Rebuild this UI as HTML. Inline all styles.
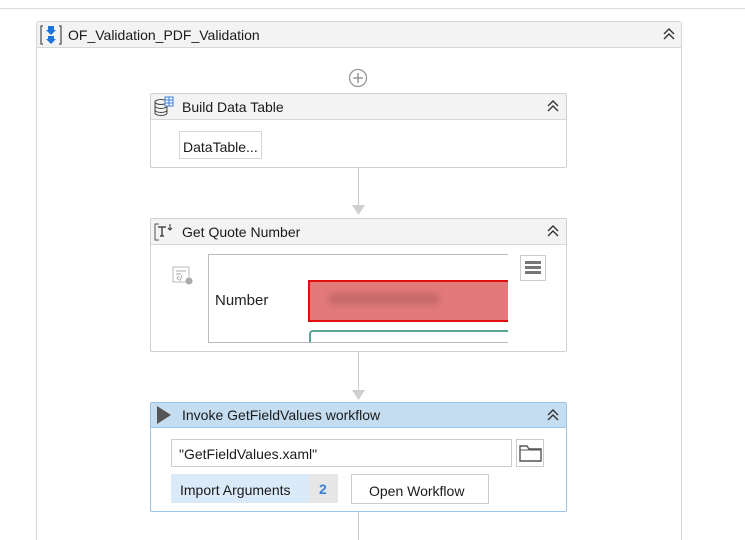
<!DOCTYPE html>
<html style="overflow:hidden;height:540px"><head><style>
*{box-sizing:border-box;margin:0;padding:0}
body{width:745px;height:540px;background:#fff;position:relative;overflow:hidden;font-family:"Segoe UI","Liberation Sans",sans-serif;color:#1a1a1a}
.a{position:absolute}
.hdr{background:#f3f3f3;border-bottom:1px solid #d8d8d8}
.t{font-size:14px;line-height:18px}
</style></head><body>
<div class="a" style="left:0;top:8px;width:745px;height:1px;background:#dcdcdc"></div>
<div class="a" style="left:36px;top:21px;width:646px;height:540px;border:1px solid #d6d6d6;border-radius:3px"></div>
<div class="a hdr" style="left:37px;top:22px;width:644px;height:26px"></div>
<svg class="a" style="left:39px;top:24px" width="24" height="22" viewBox="0 0 24 22"><path d="M4 2H2v18h2M20 2h2v18h-2" stroke="#555" stroke-width="1.3" fill="none"/><rect x="9" y="2" width="6" height="4" fill="#1e73d8"/><path d="M7 6h10l-5 5z" fill="#1e73d8"/><rect x="9" y="12" width="6" height="3" fill="#1e73d8"/><path d="M7 15h10l-5 5z" fill="#1e73d8"/></svg>
<div class="a t" style="left:68px;top:26px">OF_Validation_PDF_Validation</div>
<svg class="a" style="left:662px;top:27px" width="14" height="14" viewBox="0 0 14 14"><path d="M2 7l5-5 5 5M2 12l5-5 5 5" stroke="#333" stroke-width="1.4" fill="none"/></svg>
<svg class="a" style="left:348px;top:68px" width="20" height="20"><circle cx="10" cy="10" r="8.5" stroke="#999" stroke-width="1.3" fill="none"/><path d="M10 5v10M5 10h10" stroke="#888" stroke-width="1.3"/></svg>

<div class="a" style="left:150px;top:93px;width:417px;height:75px;border:1px solid #d0d0d0;border-radius:2px"></div>
<div class="a hdr" style="left:151px;top:94px;width:415px;height:26px"></div>
<svg class="a" style="left:153px;top:96px" width="22" height="22" viewBox="0 0 22 22"><ellipse cx="8" cy="6" rx="6" ry="2.5" fill="none" stroke="#444"/><path d="M2 6v11c0 1.5 3 2.5 6 2.5s6-1 6-2.5V6M2 10c0 1.5 3 2.5 6 2.5s6-1 6-2.5M2 14c0 1.5 3 2.5 6 2.5s6-1 6-2.5" fill="none" stroke="#444"/><rect x="12" y="1" width="8" height="9" fill="#fff" stroke="#3b7ed6"/><path d="M12 4h8M12 7h8M16 1v9" stroke="#3b7ed6"/></svg>
<div class="a t" style="left:182px;top:98px">Build Data Table</div>
<svg class="a" style="left:546px;top:99px" width="14" height="14" viewBox="0 0 14 14"><path d="M2 7l5-5 5 5M2 12l5-5 5 5" stroke="#333" stroke-width="1.4" fill="none"/></svg>
<div class="a t" style="left:179px;top:131px;width:83px;height:28px;border:1px solid #d6d6d6;padding:6px 0 0 3px">DataTable...</div>

<div class="a" style="left:358px;top:168px;width:1px;height:40px;background:#ccc"></div>
<svg class="a" style="left:352px;top:205px" width="13" height="10"><path d="M0 0h13l-6.5 10z" fill="#cfcfcf"/></svg>

<div class="a" style="left:150px;top:218px;width:417px;height:134px;border:1px solid #d0d0d0;border-radius:2px"></div>
<div class="a hdr" style="left:151px;top:219px;width:415px;height:26px"></div>
<svg class="a" style="left:153px;top:221px" width="22" height="22" viewBox="0 0 22 22"><path d="M6 3H2v16h4" stroke="#555" fill="none"/><path d="M5 6h8M9 6v9M7 15h4" stroke="#333" stroke-width="1.3" fill="none"/><path d="M17 3v6M15 7l2 2 2-2" stroke="#333" fill="none"/></svg>
<div class="a t" style="left:182px;top:223px">Get Quote Number</div>
<svg class="a" style="left:546px;top:224px" width="14" height="14" viewBox="0 0 14 14"><path d="M2 7l5-5 5 5M2 12l5-5 5 5" stroke="#333" stroke-width="1.4" fill="none"/></svg>
<svg class="a" style="left:172px;top:266px" width="22" height="20"><rect x="1" y="1" width="16" height="15" fill="none" stroke="#bbb"/><path d="M4 5h10M4 8h5M7 10l-2 2 2 2M10 9l-2 6" stroke="#aaa" fill="none"/><circle cx="17" cy="15" r="3.5" fill="#aaa"/></svg>
<div class="a" style="left:208px;top:254px;width:300px;height:89px;border:1px solid #bbb;border-right:none;overflow:hidden;background:#fff">
<div class="a" style="left:6px;top:37px;font-size:15px;font-family:'Liberation Sans',sans-serif;color:#222">Number</div>
<div class="a" style="left:99px;top:25px;width:205px;height:42px;background:#e27a7a;border:2px solid #e01010;border-right:none"></div>
<div class="a" style="left:120px;top:38px;width:110px;height:12px;background:#c86a6a;filter:blur(3px)"></div>
<div class="a" style="left:100px;top:75px;width:205px;height:20px;border:2px solid #5aa596;border-radius:4px;border-right:none"></div>
</div>
<div class="a" style="left:520px;top:255px;width:26px;height:26px;border:1px solid #ccc;background:#fff"></div>
<div class="a" style="left:525px;top:261px;width:16px;height:3px;background:#777;box-shadow:0 5px 0 #777,0 10px 0 #777"></div>

<div class="a" style="left:358px;top:352px;width:1px;height:40px;background:#ccc"></div>
<svg class="a" style="left:352px;top:390px" width="13" height="10"><path d="M0 0h13l-6.5 10z" fill="#cfcfcf"/></svg>

<div class="a" style="left:150px;top:402px;width:417px;height:110px;border:1px solid #9cc4e6;border-radius:2px"></div>
<div class="a" style="left:151px;top:403px;width:415px;height:25px;background:#c5ddf0;border-bottom:1px solid #9cc4e6"></div>
<svg class="a" style="left:155px;top:405px" width="18" height="20"><path d="M2 1l14 9-14 9z" fill="#555"/></svg>
<div class="a t" style="left:182px;top:406px">Invoke GetFieldValues workflow</div>
<svg class="a" style="left:546px;top:408px" width="14" height="14" viewBox="0 0 14 14"><path d="M2 7l5-5 5 5M2 12l5-5 5 5" stroke="#333" stroke-width="1.4" fill="none"/></svg>
<div class="a t" style="left:171px;top:439px;width:341px;height:28px;border:1px solid #ccc;padding:5px 0 0 7px">"GetFieldValues.xaml"</div>
<div class="a" style="left:516px;top:439px;width:28px;height:28px;border:1px solid #ccc"></div>
<svg class="a" style="left:519px;top:445px" width="23" height="17"><path d="M1 1h7l2 3h12v12H1z" fill="none" stroke="#555" stroke-width="1.4"/><path d="M1 5h21" stroke="#555"/></svg>
<div class="a t" style="left:171px;top:474px;width:138px;height:29px;background:#dbeaf8;padding:7px 0 0 9px">Import Arguments</div>
<div class="a t" style="left:309px;top:474px;width:29px;height:29px;background:#e6e6e6;padding:6px 0 0 10px;color:#3a80d0;font-weight:bold">2</div>
<div class="a t" style="left:351px;top:474px;width:138px;height:30px;border:1px solid #ccc;padding:7px 0 0 17px">Open Workflow</div>

<div class="a" style="left:358px;top:512px;width:1px;height:28px;background:#ccc"></div>
</body></html>
